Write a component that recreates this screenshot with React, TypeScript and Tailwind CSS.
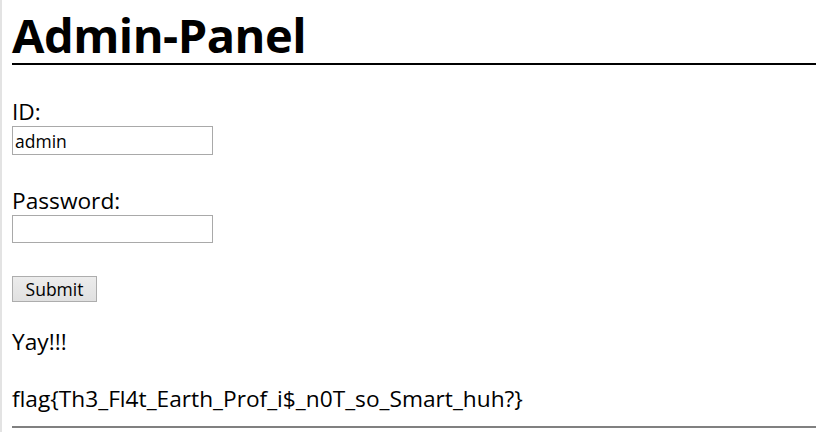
export default function App() {
  return (
    <div
      className="min-h-[432px] border-l-2 border-[#e3e3e3] bg-white pl-[10px] text-black"
      style={{ fontFamily: '"Open Sans", "Noto Sans", sans-serif' }}
    >
      {/* Title */}
      <h1 className="h-[65px] border-b-2 border-black text-[47px] font-bold leading-[70px] tracking-[-0.5px]">
        Admin-Panel
      </h1>

      <form className="flex flex-col" onSubmit={(e) => e.preventDefault()}>
        <label className="mt-[33px] text-[22.7px] leading-[28px]">ID:</label>
        <input
          defaultValue="admin"
          className="h-[29px] w-[201px] border border-[#a9a9a9] px-[2px] text-[17.5px] outline-none"
        />

        <label className="mt-[32px] text-[22.7px] leading-[28px]">Password:</label>
        <input
          type="password"
          className="h-[28px] w-[201px] border border-[#a9a9a9] px-[2px] text-[17.5px] outline-none"
        />

        <button
          type="submit"
          className="mt-[33px] h-[26px] w-[85px] border border-[#adadad] bg-gradient-to-b from-[#ececec] to-[#e0e0e0] text-[17.5px] leading-[24px]"
        >
          Submit
        </button>
      </form>

      <p className="mt-[26px] text-[22.7px] leading-[28px]">Yay!!!</p>
      <p className="mt-[29px] text-[22.7px] leading-[28px]">
        flag{"{"}Th3_Fl4t_Earth_Prof_i$_n0T_so_Smart_huh?{"}"}
      </p>
      <hr className="mt-[13px] border-t-2 border-[#808080]" />
    </div>
  );
}
